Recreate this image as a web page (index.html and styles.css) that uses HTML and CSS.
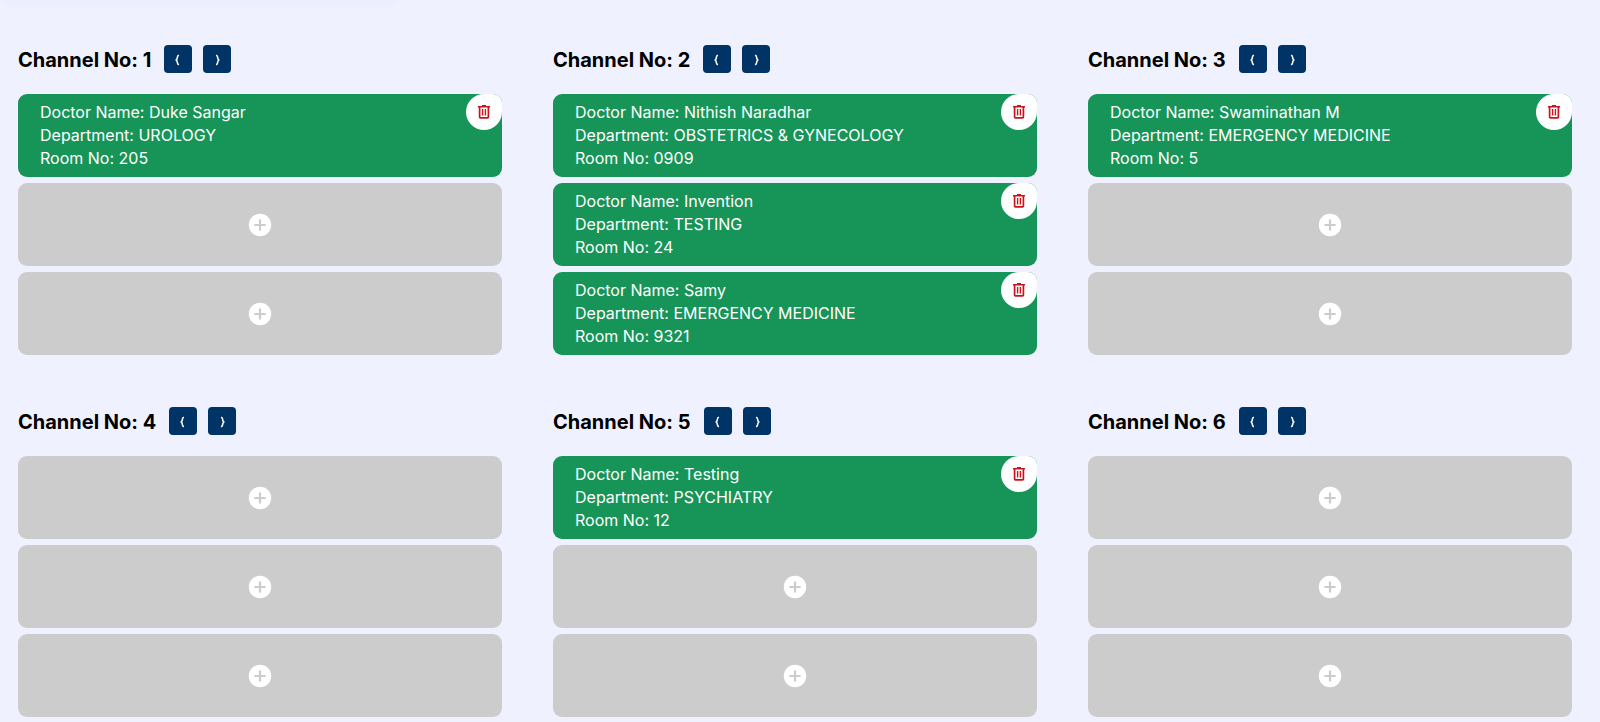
FILE: index.html
```
<!DOCTYPE html>
<html lang="en">
<head>
<meta charset="utf-8">
<title>Channels</title>
<link rel="stylesheet" href="styles.css">
</head>
<body>
<svg class="sprite" aria-hidden="true">
  <symbol id="prev" viewBox="0 0 28 28"><path d="M15 10.300q-1.600.3-1.600 1.900 0 1.800-1.200 2.800 1.200 1 1.200 2.800 0 1.600 1.600 1.900" fill="none" stroke="currentColor" stroke-width="1.600"/></symbol>
  <symbol id="next" viewBox="0 0 28 28"><path d="M13 10.300q1.600.3 1.600 1.900 0 1.800 1.200 2.800-1.200 1-1.200 2.800 0 1.600-1.600 1.900" fill="none" stroke="currentColor" stroke-width="1.600"/></symbol>
  <symbol id="plus" viewBox="0 0 24 24"><circle cx="12" cy="12" r="11.200" fill="#fff"/><path d="M12 6.400v11.200M6.400 12h11.200" stroke="#ccc" stroke-width="2.200"/></symbol>
  <symbol id="trash" viewBox="0 0 16 16"><path d="M2 2.700h12M6 1.700h4" fill="none" stroke="currentColor" stroke-width="1.600"/><path d="M3.600 3v10q0 .8.800.8h7.200q.8 0 .8-.8V3" fill="none" stroke="currentColor" stroke-width="1.700"/><path d="M6.600 5v6.600M9.400 5v6.600" fill="none" stroke="currentColor" stroke-width="1.400"/></symbol>
</svg>
<div class="panel-edge"></div>
<main class="channels" id="channels"></main>
<script src="app.js"></script>
</body>
</html>
```
FILE: app.js
```
const channels = [
  [["Duke Sangar", "UROLOGY", "205"]],
  [["Nithish Naradhar", "OBSTETRICS & GYNECOLOGY", "0909"],
   ["Invention", "TESTING", "24"],
   ["Samy", "EMERGENCY MEDICINE", "9321"]],
  [["Swaminathan M", "EMERGENCY MEDICINE", "5"]],
  [],
  [["Testing", "PSYCHIATRY", "12"]],
  []
];
const SLOTS = 3;
const icon = (id) => `<svg class="icon icon-${id}" aria-hidden="true"><use href="#${id}"/></svg>`;
const esc = (s) => s.replace(/&/g, "&amp;");

const doctor = ([name, dept, room]) => `
  <article class="slot doctor">
    <p>Doctor Name: ${name}</p>
    <p>Department: ${esc(dept)}</p>
    <p>Room No: ${room}</p>
    <button class="remove" aria-label="Remove ${name}">${icon("trash")}</button>
  </article>`;
const empty = () => `<button class="slot add" aria-label="Add doctor">${icon("plus")}</button>`;

document.getElementById("channels").innerHTML = channels.map((list, i) => `
  <section class="channel">
    <header class="channel-head">
      <h2>Channel No: ${i + 1}</h2>
      <div class="steps">
        <button class="step" aria-label="Previous">${icon("prev")}</button>
        <button class="step" aria-label="Next">${icon("next")}</button>
      </div>
    </header>
    <div class="slots">
      ${Array.from({ length: SLOTS }, (_, n) => list[n] ? doctor(list[n]) : empty()).join("")}
    </div>
  </section>`).join("");
```
FILE: styles.css
```
* { box-sizing: border-box; }
body {
  margin: 0;
  background: #f0f1ff;
  font-family: Inter, "Liberation Sans", sans-serif;
  overflow: hidden;
}
button { border: 0; padding: 0; cursor: pointer; }
.sprite { display: none; }
.icon { display: block; }
.panel-edge {
  width: 24%;
  height: 0;
  margin-left: 8px;
  box-shadow: 0 0 10px 2px #e2e3f6;
}
.channels {
  display: grid;
  grid-template-columns: repeat(3, 1fr);
  gap: 52px 51px;
  padding: 45px 28px 0 18px;
}
.channel-head {
  display: flex;
  align-items: center;
  gap: 13px;
  margin-bottom: 21px;
}
.channel-head h2 {
  margin: 0;
  padding-top: 2px;
  font-size: 20px;
  line-height: 26px;
  font-weight: 700;
  color: #000;
}
.steps { display: flex; gap: 11px; }
.step {
  width: 28px;
  height: 28px;
  border-radius: 4px;
  background: #003366;
  color: #fff;
}
.icon-prev, .icon-next { width: 28px; height: 28px; }
.slots { display: flex; flex-direction: column; gap: 6px; }
.slot {
  width: 100%;
  min-height: 83px;
  border-radius: 9px;
}
.doctor {
  position: relative;
  padding: 7px 22px;
  background: #179457;
  color: #fff;
}
.doctor p {
  margin: 0;
  font-size: 16px;
  line-height: 23px;
}
.add {
  display: grid;
  place-items: center;
  background: #ccc;
}
.icon-plus { width: 24px; height: 24px; }
.remove {
  position: absolute;
  top: 0;
  right: 0;
  display: grid;
  place-items: center;
  width: 36px;
  height: 36px;
  border-radius: 18px 9px 18px 18px;
  background: #fff;
  color: #c9141e;
}
.icon-trash { width: 16px; height: 16px; }
```
